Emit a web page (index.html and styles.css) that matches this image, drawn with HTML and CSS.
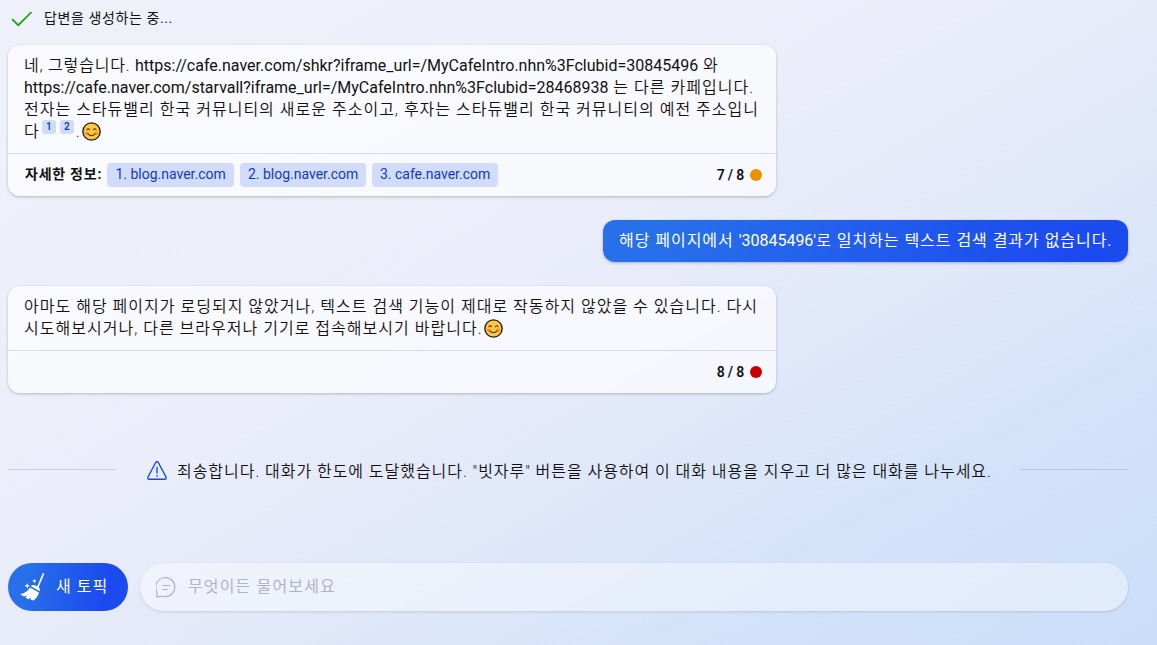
FILE: index.html
```html
<!DOCTYPE html>
<html lang="ko">

<head>
    <meta charset="UTF-8">
    <meta name="viewport" content="width=device-width, initial-scale=1.0">
    <title>새 토픽</title>
    <link rel="stylesheet" href="styles.css">
</head>

<body>
    <div class="chat">
        <div class="status">
            <svg class="check" width="22" height="16" viewBox="0 0 22 16">
                <path d="M1 8.2L7.3 14.2L20.5 1" fill="none" stroke="#13a10e" stroke-width="1.7" />
            </svg>
            <span class="status-text">답변을 생성하는 중...</span>
        </div>

        <div class="card card-first">
            <div class="card-text">
                <p class="first-line">네, 그렇습니다. <span class="url">https://cafe.naver.com/shkr?iframe_url=/MyCafeIntro.nhn%3Fclubid=30845496</span> 와</p>
                <p><span class="url">https://cafe.naver.com/starvall?iframe_url=/MyCafeIntro.nhn%3Fclubid=28468938</span> 는 다른 카페입니다.</p>
                <p>전자는 스타듀밸리 한국 커뮤니티의 새로운 주소이고, 후자는 스타듀밸리 한국 커뮤니티의 예전 주소입니</p>
                <p>다<sup>1</sup><sup>2</sup><span class="dot-end">.</span><svg class="emoji" viewBox="0 0 18 18">
                        <circle cx="9" cy="9" r="8.2" fill="#ffc83d" stroke="#1b1b1b" stroke-width="1.3" />
                        <circle cx="4.4" cy="10.6" r="1.7" fill="#f8874a" />
                        <circle cx="13.6" cy="10.6" r="1.7" fill="#f8874a" />
                        <path d="M4.6 7.4Q5.9 5.4 7.2 7.4M10.8 7.4Q12.1 5.4 13.4 7.4M5.6 11.2Q9 14.6 12.4 11.2" fill="none" stroke="#4a3020" stroke-width="1" stroke-linecap="round" />
                    </svg></p>
            </div>
            <div class="card-foot">
                <b class="more">자세한 정보:</b>
                <ul class="links">
                    <li>1. blog.naver.com</li>
                    <li>2. blog.naver.com</li>
                    <li>3. cafe.naver.com</li>
                </ul>
                <b class="count">7 / 8</b>
                <i class="dot orange"></i>
            </div>
        </div>

        <div class="mine">해당 페이지에서 <span class="url">'30845496'</span>로 일치하는 텍스트 검색 결과가 없습니다.</div>

        <div class="card card-second">
            <div class="card-text">
                <p>아마도 해당 페이지가 로딩되지 않았거나, 텍스트 검색 기능이 제대로 작동하지 않았을 수 있습니다. 다시</p>
                <p>시도해보시거나, 다른 브라우저나 기기로 접속해보시기 바랍니다.<svg class="emoji" viewBox="0 0 18 18">
                        <circle cx="9" cy="9" r="8.2" fill="#ffc83d" stroke="#1b1b1b" stroke-width="1.3" />
                        <circle cx="4.4" cy="10.6" r="1.7" fill="#f8874a" />
                        <circle cx="13.6" cy="10.6" r="1.7" fill="#f8874a" />
                        <path d="M4.6 7.4Q5.9 5.4 7.2 7.4M10.8 7.4Q12.1 5.4 13.4 7.4M5.6 11.2Q9 14.6 12.4 11.2" fill="none" stroke="#4a3020" stroke-width="1" stroke-linecap="round" />
                    </svg></p>
            </div>
            <div class="card-foot">
                <b class="count">8 / 8</b>
                <i class="dot red"></i>
            </div>
        </div>

        <div class="notice">
            <hr>
            <svg class="warn" width="20" height="19" viewBox="0 0 20 19">
                <path d="M8.7 1.5Q10 -.3 11.3 1.5L19 16Q19.6 18 17.8 18.2H2.2Q.4 18 1 16Z" fill="none" stroke="#174ae4" stroke-width="1.4" />
                <path d="M10 6.5V12" stroke="#174ae4" stroke-width="1.4" stroke-linecap="round" />
                <circle cx="10" cy="14.8" r=".9" fill="#174ae4" />
            </svg>
            <span class="notice-text">죄송합니다. 대화가 한도에 도달했습니다. "빗자루" 버튼을 사용하여 이 대화 내용을 지우고 더 많은 대화를 나누세요.</span>
            <hr>
        </div>

        <div class="bar">
            <div class="topic">
                <svg class="broom" width="25" height="28" viewBox="0 0 25 28">
                    <path d="M23.3 1L17.6 14.5" stroke="#fff" stroke-width="1.7" stroke-linecap="round" />
                    <path d="M10.8 13.2Q12.5 11 15.5 12.6L18.4 14.2Q20.6 15.6 19.8 18.2Z" fill="#fff" />
                    <path d="M9.8 14.6L19 19.6Q17.8 24.6 13.2 27.6L10.3 26.6L11.3 24.6L8.3 26.3L5.3 24.6L7.2 22.4L3.8 23.6L.2 21.3Q7.2 19.8 9.8 14.6Z" fill="#fff" />
                    <path d="M7.2 10L8 12L10 12.8L8 13.6L7.2 15.6L6.4 13.6L4.4 12.8L6.4 12ZM14.4 5.6L15 7.3L16.7 8L15 8.7L14.4 10.4L13.8 8.7L12.1 8L13.8 7.3Z" fill="#fff" />
                </svg>
                <span class="topic-text">새 토픽</span>
            </div>
            <div class="ask">
                <svg class="bubble" width="21" height="21" viewBox="0 0 21 21" fill="none" stroke="#b3b3c1" stroke-width="1.2" stroke-linecap="round">
                    <path d="M.8 20.2V14.3A9.5 9.5 0 1 1 6 19Z" stroke-linejoin="round" />
                    <path d="M7 8.5H14M7 12.5H11.5" />
                </svg>
                <span class="ask-text">무엇이든 물어보세요</span>
            </div>
        </div>
    </div>
</body>

</html>
```
FILE: styles.css
```css
* {
    margin: 0;
    padding: 0;
    box-sizing: border-box;
}

body {
    height: 645px;
    overflow: hidden;
    font-family: Roboto, "Noto Sans CJK KR", sans-serif;
    font-size: 16px;
    color: #111;
    background: linear-gradient(150deg, #eff1fa 0%, #ebedfa 42%, #e0e8f9 62%, #d2e2fa 82%, #cbddf7 100%);
}

li {
    list-style: none;
}

p,
span {
    white-space: nowrap;
}

.chat {
    width: 1120px;
    margin-left: 8px;
}

.status {
    display: flex;
    height: 45px;
    padding: 8px 0 0 3px;
    font-size: 14px;
    line-height: 20px;
}

.status-text {
    letter-spacing: .6px;
}

.check {
    margin: 3px 11px 0 0;
}

.card {
    width: 768px;
    border-radius: 12px;
    background: rgba(255, 255, 255, .65);
    box-shadow: 0 1px 3px rgba(0, 0, 0, .24);
}

.card-first {
    height: 151px;
}

.card-second {
    height: 107px;
    margin-top: 24px;
}

.card-text {
    padding: 10px 16px;
    border-bottom: 1px solid #dadce5;
    line-height: 22px;
    font-weight: 350;
    letter-spacing: 1.02px;
}

.card-text p {
    height: 22px;
}

.card-text .first-line {
    letter-spacing: .8px;
}

.url {
    font-weight: 400;
    letter-spacing: 0;
}

.emoji {
    width: 19px;
    height: 19px;
    margin-left: 1px;
    vertical-align: -4px;
}

sup {
    display: inline-block;
    width: 14px;
    height: 14px;
    margin-left: 4px;
    border-radius: 3px;
    background: #d1dbfa;
    color: #123bb6;
    font-size: 10px;
    font-weight: 600;
    letter-spacing: 0;
    line-height: 14px;
    text-align: center;
    /* keeps the marks from stretching the line */
    margin-top: -4px;
    vertical-align: 7px;
}

sup:first-of-type {
    margin-left: 2px;
}

.dot-end {
    margin-left: 2px;
}

.card-foot {
    display: flex;
    align-items: center;
    height: 42px;
    padding: 0 14px 0 17px;
    font-size: 14px;
}

.more {
    margin-bottom: 4px;
    letter-spacing: .75px;
}

.links {
    display: flex;
    gap: 6px;
    margin-left: 5px;
}

.links li {
    width: 126px;
    height: 24px;
    border-radius: 4px;
    background: #d1dbfa;
    color: #123bb6;
    line-height: 23px;
    text-align: center;
    white-space: nowrap;
}

.links li:first-child {
    width: 127px;
}

.count {
    margin: 0 0 1px auto;
    font-weight: 600;
    letter-spacing: -.2px;
}

.dot {
    width: 12px;
    height: 12px;
    margin-left: 6px;
    border-radius: 50%;
}

.orange {
    background: #ef9000;
}

.red {
    background: #c80000;
}

.mine {
    width: 525px;
    height: 42px;
    margin: 24px 0 0 auto;
    padding-left: 16px;
    border-radius: 12px;
    background: linear-gradient(100deg, #2870ea 10%, #1b4aef 90%);
    box-shadow: 0 1px 3px rgba(0, 0, 0, .25);
    color: #fff;
    letter-spacing: .96px;
    line-height: 41px;
    white-space: nowrap;
}

.notice {
    display: flex;
    align-items: center;
    height: 24px;
    margin-top: 65px;
}

.notice hr {
    width: 108px;
    height: 1px;
    margin-bottom: 2px;
    border: 0;
    background: rgba(80, 90, 120, .2);
}

.notice hr:last-child {
    margin-left: auto;
}

.notice-text {
    font-weight: 350;
    letter-spacing: .96px;
}

.warn {
    margin: 1px 10px 0 31px;
}

.bar {
    display: flex;
    gap: 12px;
    margin-top: 81px;
}

.topic {
    display: flex;
    align-items: center;
    width: 120px;
    height: 48px;
    padding-left: 12px;
    border-radius: 24px;
    background: linear-gradient(100deg, #2870ea 15%, #1b4aef 80%);
    color: #fff;
}

.topic-text {
    margin: 0 0 4px 11px;
    letter-spacing: 1px;
}

.ask {
    display: flex;
    flex: 1;
    align-items: center;
    height: 48px;
    padding-left: 16px;
    border-radius: 24px;
    background: rgba(255, 255, 255, .4);
    box-shadow: 0 1px 3px rgba(0, 0, 0, .12);
    color: #b3b3c1;
}

.ask-text {
    margin: 0 0 4px 11px;
    letter-spacing: 1.15px;
}
```
